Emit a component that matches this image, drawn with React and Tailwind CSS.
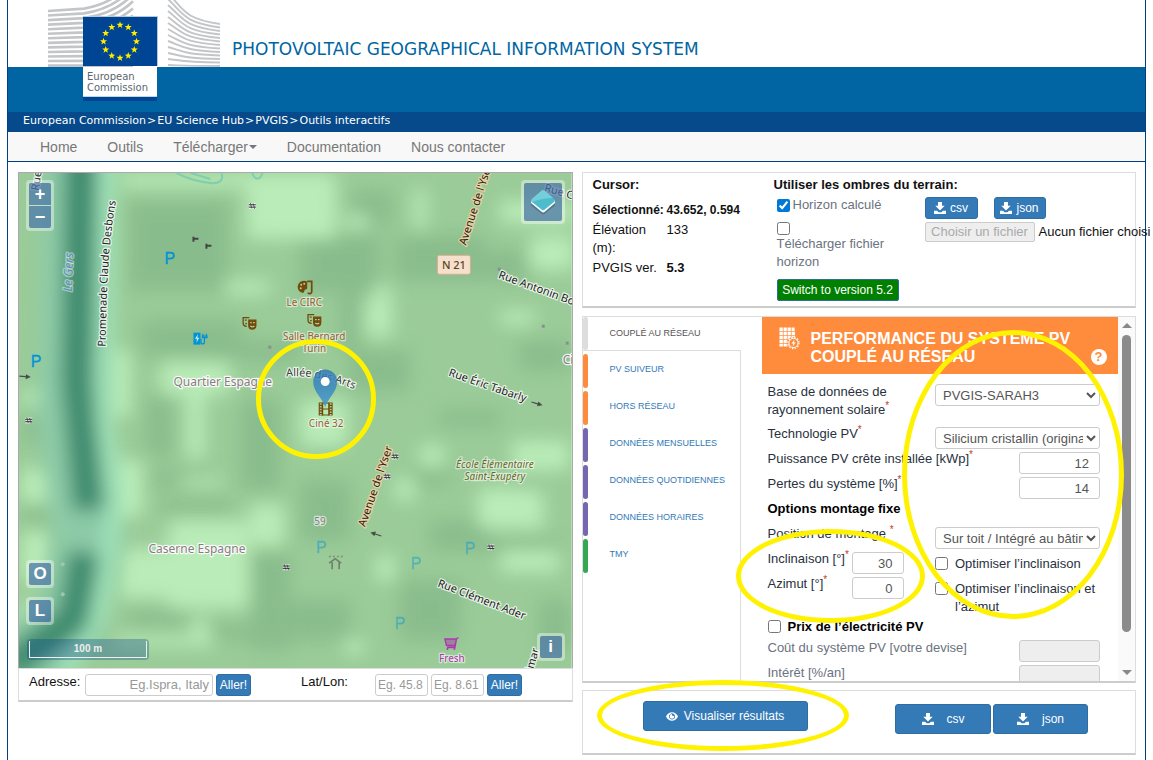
import { useState } from "react";

// Icons (download, eye, solar panel)
const DownloadIcon = ({ className }) => (
  <svg viewBox="0 0 14 14" className={className} fill="currentColor" aria-hidden="true">
    <path d="M4.700 0h4.600v4.500h3.200L7 10 1.500 4.500h3.200z" />
    <path d="M0 10.200h3.600L5.400 12h3.200l1.800-1.800H14V14H0z" />
  </svg>
);

const EyeIcon = ({ className }) => (
  <svg viewBox="0 0 14 12" className={className} fill="currentColor" aria-hidden="true">
    <path fillRule="evenodd" d="M7 1C3.800 1 1.200 3 0 6c1.200 3 3.800 5 7 5s5.800-2 7-5C12.800 3 10.200 1 7 1zm0 1.300c1 .3 3.600 1.100 3.600 3.500S9 9.600 7 9.600 3.400 8 3.400 5.800 6 2.600 7 2.300z" />
    <path d="M7 3.200a2.700 2.700 0 1 0 2.700 2.700c0-.4-.1-.8-.3-1.200A1.300 1.300 0 0 1 7.200 3.200z" />
  </svg>
);

const PanelIcon = () => (
  <svg viewBox="0 0 21 23" className="h-[23px] w-[21px] shrink-0" aria-hidden="true">
    <path d="M.5.5h15l1 12-5 7H.5z" fill="#fff" />
    <path d="M4.300 0v20M8.300 0v20M12.300 0v11M0 4.500h17M0 8.500h17M0 12.500h11M0 16.500h10" stroke="#ff8c3c" strokeWidth=".7" />
    <circle cx="14.500" cy="16" r="6.300" fill="#ff8c3c" />
    <circle cx="14.500" cy="16" r="4.600" fill="none" stroke="#fff" strokeWidth="1" />
    <circle cx="14.500" cy="16" r="5.600" fill="none" stroke="#fff" strokeWidth="1.200" strokeDasharray="1.400 1.530" />
    <path d="M15.500 12.800l-3 3.700h1.800l-.6 2.900 3-3.900h-1.800z" fill="#fff" />
  </svg>
);

// European Commission logo
const starAt = (cx, cy, r) => {
  const pts = [];
  for (let i = 0; i < 10; i++) {
    const a = (Math.PI / 5) * i - Math.PI / 2;
    const rad = i % 2 ? r * 0.42 : r;
    pts.push(`${(cx + rad * Math.cos(a)).toFixed(2)},${(cy + rad * Math.sin(a)).toFixed(2)}`);
  }
  return pts.join(" ");
};

const CommissionLogo = () => (
  <svg viewBox="48 0 172 102" className="h-[102px] w-[172px]" role="img" aria-label="European Commission">
    <g stroke="#c3c5c7" strokeWidth="2.600" fill="none">
      {Array.from({ length: 13 }, (_, i) => {
        const k = 12 - i;
        const y = 11 + i * 4.550;
        return <path key={i} d={`M48 ${y} L84 ${y - k * 0.2} C106 ${y - k * 0.5} 122 ${y - k * 1.400} 133 ${y - k * 2.600}`} />;
      })}
      {Array.from({ length: 13 }, (_, i) => {
        const k = 12 - i;
        const start = 65 - k * 6;
        const end = 66 - k * 3.500;
        return <path key={i} strokeWidth="1.900" d={`M168 ${start} C184 ${start + (end - start) * 0.55} 184 ${end - k * 0.45} 220 ${end}`} />;
      })}
    </g>
    <path d="M83 16h75v50H83z" fill="#b9c7dc" />
    <path d="M83 17h74v49H83z" fill="#004494" />
    <g fill="#ffed00">
      {Array.from({ length: 12 }, (_, i) => {
        const a = (Math.PI / 6) * i;
        return <polygon key={i} points={starAt(120 + 16.500 * Math.sin(a), 41.500 - 16.500 * Math.cos(a), 3.700)} />;
      })}
    </g>
    <path d="M83 67h74v30H83z" fill="#fff" />
    <path d="M83 97h74v4H83z" fill="#004494" />
    <path d="M83 96h74v1H83z" fill="#c4d2e4" />
    <g fill="#58666d" fontFamily='"DejaVu Sans", sans-serif' fontSize="10">
      <text x="87" y="80">European</text>
      <text x="87" y="91">Commission</text>
    </g>
  </svg>
);

// Terrain patches: x, y, width, height
const lightPatches = [
  [120, 172, 215, 14], [246, 176, 90, 62], [500, 200, 75, 22], [530, 235, 45, 34],
  [160, 362, 70, 32], [108, 350, 22, 66], [112, 460, 30, 56], [186, 388, 18, 70],
  [168, 520, 80, 88], [118, 548, 130, 50], [250, 504, 34, 42], [366, 300, 26, 36],
  [374, 284, 16, 24], [300, 400, 48, 46], [478, 488, 66, 40], [512, 440, 58, 30],
  [420, 445, 24, 20], [20, 468, 40, 34], [20, 532, 32, 50], [114, 636, 100, 10],
  [192, 618, 14, 20], [376, 555, 18, 26], [500, 550, 60, 22], [344, 640, 20, 14],
  [414, 188, 12, 40], [345, 214, 24, 14], [500, 310, 35, 14], [395, 478, 20, 22],
  [20, 600, 14, 34], [225, 280, 44, 14], [180, 476, 40, 10], [20, 390, 40, 14],
];
const darkPatches = [
  [128, 200, 100, 90], [352, 190, 40, 34], [300, 232, 80, 60], [140, 320, 100, 36],
  [395, 235, 90, 45], [340, 270, 20, 80], [210, 340, 90, 20], [145, 395, 28, 60],
  [150, 470, 60, 16], [160, 500, 70, 14], [240, 400, 40, 90], [250, 550, 40, 100],
  [130, 610, 60, 16], [210, 625, 70, 14], [410, 470, 40, 14], [520, 485, 22, 14],
  [490, 540, 70, 14], [400, 580, 60, 60], [290, 600, 60, 40], [520, 340, 50, 30],
  [470, 250, 60, 30], [350, 350, 60, 40], [22, 420, 40, 20], [24, 505, 30, 16],
  [440, 410, 60, 16], [430, 520, 60, 30], [300, 480, 50, 60], [540, 600, 30, 50],
];

const Hatch = ({ x, y }) => (
  <g transform={`translate(${x} ${y})`}>
    <path d="M-3.500 -1.500h7M-3.500 1.500h7" stroke="#fff" strokeWidth="3" opacity="0.6" />
    <path d="M-3.500 -1.200h7M-3.500 1.200h7" stroke="#3c3340" strokeWidth="1" />
    <path d="M-2 -3l1.500 5.500M.8 -2.500l1.500 5.500" stroke="#3c3340" strokeWidth=".7" />
  </g>
);

const Arrow = ({ x, y, turn }) => (
  <path transform={`translate(${x} ${y}) rotate(${turn})`} d="M-5.500-.6H1V-2.500L6 0 1 2.500V.6h-6.500z" fill="#4c4c4c" />
);

const Masks = ({ x, y }) => (
  <g transform={`translate(${x} ${y})`} fill="none" stroke="#734a08" strokeWidth="1.300">
    <path d="M7 1H.8v5.500c0 2 1.500 3 3.600 3.200M2.500 3.500h2M3 7.200l1.500-.6" />
    <path d="M6.500 3.500h7V9c0 2-1.400 3.400-3.500 3.400S6.500 11 6.500 9z" fill="#734a08" />
    <path d="M7.800 6h1.700M10.700 6h1.700M8 9.300c1.200 1 3 1 4 0" stroke="#a9d0a4" />
  </g>
);

const MapDrawing = () => (
  <svg
    viewBox="18 172 554 496"
    preserveAspectRatio="xMidYMid slice"
    className="absolute inset-0 h-full w-full"
    role="img"
    aria-label="Carte"
    fontFamily='"Noto Sans", sans-serif'
  >
    <defs>
      <filter id="soft" x="-20%" y="-20%" width="140%" height="140%"><feGaussianBlur stdDeviation="9" /></filter>
      <filter id="softer" x="-80%" y="-20%" width="260%" height="140%"><feGaussianBlur stdDeviation="9" /></filter>
      <linearGradient id="pin" x1="0" y1="0" x2="0" y2="1">
        <stop offset="0" stopColor="#2c77b5" />
        <stop offset="1" stopColor="#3f95d0" />
      </linearGradient>
      <path id="promenade" d="M105 346 C106 300 106 250 116 197" />
      <path id="allee" d="M286 376 Q318 373 360 391" />
    </defs>
    <rect x="18" y="172" width="554" height="496" fill="#9acb98" />
    <g filter="url(#soft)" fill="#86b98a" opacity="0.8">
      {darkPatches.map(([x, y, w, h], i) => <rect key={i} x={x} y={y} width={w} height={h} />)}
    </g>
    <g filter="url(#soft)" fill="#bdf0bc" opacity="0.9">
      {lightPatches.map(([x, y, w, h], i) => <rect key={i} x={x} y={y} width={w} height={h} />)}
    </g>

    {/* River */}
    <g filter="url(#softer)" fill="none">
      <path d="M76 150 L72 420 L88 540 L70 620 L10 680" stroke="#8dcba7" strokeWidth="70" />
      <path d="M108 150 L104 420 L116 500 L100 610 L60 680" stroke="#a3e6bd" strokeWidth="14" />
      <path d="M80 150 L76 380 L88 510" stroke="#3f8c6f" strokeWidth="32" />
      <path d="M84 552 L72 620 L30 650 L10 670" stroke="#3f8c6f" strokeWidth="32" />
    </g>

    {/* Small dots and road marks */}
    <g fill="#8d8d90">
      <rect x="498" y="267" width="3" height="3" />
      <rect x="542" y="324" width="3" height="3" />
      <rect x="566" y="341" width="3" height="3" />
      <rect x="268" y="345" width="3" height="3" />
    </g>
    <circle cx="62" cy="564" r="2" fill="#9ac9ad" />
    <circle cx="62" cy="594" r="2" fill="#9ac9ad" />
    <path d="M176 172c10 5 24 9 34 10 8 1 14-2 11-10M190 172l20 6M252 172c2 7 8 8 10 0" fill="none" stroke="#7fcfae" strokeWidth="2" />
    <Hatch x="252" y="205" />
    <Hatch x="28" y="420" />
    <Hatch x="286" y="567" />
    <Hatch x="395" y="456" />
    <Hatch x="387" y="476" />
    <Hatch x="491" y="547" />
    <Arrow x="24" y="376" turn="4" />
    <Arrow x="537" y="403" turn="16" />
    <Arrow x="376" y="534" turn="-162" />
    <path d="M192 238h6M193 236v5M205 245h6M206 243v5" stroke="#444" strokeWidth="2" />

    {/* Parkings and charging point */}
    <g fill="#0092da" stroke="#0092da" strokeWidth=".3" fontFamily='"Liberation Sans", sans-serif' fontSize="16">
      <text x="164" y="263">P</text>
      <text x="30" y="366">P</text>
      <g opacity="0.45">
        <text x="316" y="553">P</text>
        <text x="411" y="569">P</text>
        <text x="465" y="554">P</text>
        <text x="395" y="629">P</text>
      </g>
    </g>
    <path d="M193 332h7v12h-7z" fill="#0092da" />
    <path d="M197.500 333.500l-3 4.500h2l-.6 4 3-5h-2z" fill="#c9f0d8" />
    <path d="M200.500 338v3c0 3 3.500 3 3.500 0V337M202.500 333v2M206 333v2M202 335.500h4.500v1.500h-4.500z" fill="none" stroke="#0092da" strokeWidth="1.300" />

    {/* Culture icons */}
    <Masks x="242" y="316" />
    <Masks x="307" y="313" />
    <path d="M304 280c-4 0-6.500 3-6.500 6.300s2.500 5.700 5 5.700c2 0 1-2 2.200-3 1-.8 2.300 0 2.300-2V281c-1-.7-2-1-3-1z" fill="#734a08" />
    <circle cx="301" cy="284" r="1" fill="#a9d0a4" />
    <circle cx="300.500" cy="287.500" r="1" fill="#a9d0a4" />
    <circle cx="304" cy="283" r="1" fill="#a9d0a4" />
    <path d="M307 280.500h4.500v10.500c0 2-3 2.500-3.800 1" fill="none" stroke="#734a08" strokeWidth="1.700" />
    <path d="M318.500 402h4.500v13h-4.500zM328 402h4.500v13H328z" fill="#734a08" />
    <path d="M320.500 402.800v12M330.500 402.800v12" stroke="#a9d0a4" strokeWidth="1.800" strokeDasharray="1.500 1.200" />
    <path d="M322 402.500h7M322 408.500h7M322 414.500h7" stroke="#734a08" strokeWidth="1" />
    <path d="M329 563l6-4.500 6 4.500M332 562v7M339 562v7" fill="none" stroke="#6f7f6c" strokeWidth="1.600" />
    <path d="M329 557l1.500-1.500M333 557l1.500-1.500M337 557l1.500-1.500M341 557l1.500-1.500" stroke="#7d8b7a" strokeWidth="1.200" />
    <path d="M445 639h11.500l-1.500 6.500h-8.500zM458.500 637.500l-2 1.500-1.500 8.500h-8" fill="#ac39ac" fillOpacity="0.5" stroke="#ac39ac" strokeWidth="1.400" />
    <circle cx="447.500" cy="649" r="1" fill="#ac39ac" />
    <circle cx="454.500" cy="649" r="1" fill="#ac39ac" />

    {/* Road number */}
    <rect x="437.500" y="254.500" width="33" height="19" rx="2" fill="#f5e0cd" stroke="#dcae91" />
    <text x="442" y="268" fontSize="11" fontWeight="500" fill="#5e4420">N 21</text>

    {/* Labels */}
    <g stroke="#fff" strokeOpacity="0.75" strokeWidth="2.500" strokeLinejoin="round" paintOrder="stroke" fontSize="11" fill="#222">
      <text><textPath href="#promenade">Promenade Claude Desbons</textPath></text>
      <text fillOpacity="0.9"><textPath href="#allee">Allée des Arts</textPath></text>
      <text transform="translate(448 375) rotate(19)">Rue Éric Tabarly</text>
      <text transform="translate(498 277) rotate(20)">Rue Antonin Bourdelle</text>
      <text transform="translate(437 586) rotate(21)">Rue Clément Ader</text>
      <text transform="translate(544 190) rotate(16)">Rue Claude</text>
      <text transform="translate(38 190) rotate(-82)">Rue de la</text>
      <text transform="translate(533 672) rotate(-74)">lmar</text>
      <g stroke="#f6d3a2" strokeOpacity="0.9">
        <text transform="translate(466 245) rotate(-72)">Avenue de l'Yser</text>
        <text transform="translate(365 527) rotate(-71)">Avenue de l'Yser</text>
      </g>
      <text transform="translate(71 291) rotate(-88)" fontStyle="italic" fontSize="12" fill="#5b8fc0" strokeOpacity="0.45">Le Gers</text>
      <g fill="#8a7c82" fontSize="12" strokeOpacity="0.9">
        <text x="173" y="385">Quartier Espagne</text>
        <text x="148" y="553">Caserne Espagne</text>
        <text x="314" y="525" fontSize="10" strokeOpacity="0.6">59</text>
        <text x="563" y="363">Cité</text>
      </g>
      <g textAnchor="middle" fill="#94622c" strokeOpacity="0.55" fontSize="10">
        <text x="304" y="305">Le CIRC</text>
        <text x="314" y="339">Salle Bernard</text>
        <text x="314" y="351">Turin</text>
        <text x="326" y="427">Ciné 32</text>
        <text x="452" y="662" fill="#ac39ac">Fresh</text>
        <g fill="#6b6a2c" fontStyle="italic">
          <text x="495" y="468">École Élémentaire</text>
          <text x="495" y="480">Saint-Exupéry</text>
        </g>
      </g>
    </g>

    {/* Marker */}
    <path d="M325 407c-2-9-12-15-12-26a12 12 0 0 1 24 0c0 11-10 17-12 26z" fill="url(#pin)" fillOpacity="0.82" />
    <circle cx="325" cy="381" r="4.500" fill="#fff" />
  </svg>
);

const MapButton = ({ children, className, label }) => (
  <div className={`absolute rounded bg-white/40 p-[3px] ${className}`}>
    <button aria-label={label} className="block h-[22px] w-[22px] rounded-xs bg-[#003c88]/50 text-center text-[17px] leading-[20px] font-bold text-white">
      {children}
    </button>
  </div>
);

// Hand drawn ring over the page
const Ring = ({ className }) => (
  <div className={`pointer-events-none absolute z-20 rounded-[50%] border-[5px] border-[#fff200] ${className}`} />
);

const tabs = [
  { name: "PV SUIVEUR", color: "bg-[#ff8c3c]" },
  { name: "HORS RÉSEAU", color: "bg-[#ff8c3c]" },
  { name: "DONNÉES MENSUELLES", color: "bg-[#7668b0]" },
  { name: "DONNÉES QUOTIDIENNES", color: "bg-[#7668b0]" },
  { name: "DONNÉES HORAIRES", color: "bg-[#7668b0]" },
  { name: "TMY", color: "bg-[#35a853]" },
];

const panel = "border border-b-2 border-[#ddd] border-b-[#ccc] bg-white";
const btn = "inline-flex items-center justify-center rounded-[3px] border border-[#2e6da4] bg-[#337ab7] text-[12px] font-medium text-white";
const field = "h-[22px] rounded-[3px] border border-[#ccc] bg-white text-[#555]";

const Star = () => <sup className="text-[10px] leading-none text-[#c0392b]">*</sup>;

const App = () => {
  const [horizon, setHorizon] = useState(true);
  const [peak, setPeak] = useState("12");
  const [loss, setLoss] = useState("14");
  const [slope, setSlope] = useState("30");
  const [azimuth, setAzimuth] = useState("0");

  return (
    <div className="min-h-screen overflow-x-clip bg-white px-[7px] font-['Liberation_Sans',Arial,sans-serif] text-[13px] leading-[18px] text-[#111]">
      <div className="min-h-screen border-x border-[#004080]">

        {/* Header */}
        <header className="relative font-['DejaVu_Sans',Verdana,sans-serif]">
          <div className="absolute top-0 left-[40px]"><CommissionLogo /></div>
          <div className="flex h-[67px] items-end pb-[7px] pl-[224px]">
            <h1 className="text-[17px] leading-[22px] text-[#0065a2]">PHOTOVOLTAIC GEOGRAPHICAL INFORMATION SYSTEM</h1>
          </div>
          <div className="h-[45px] bg-[#0065a2]" />
          <div className="flex h-5 items-center gap-px bg-[#064a8b] pb-[3px] pl-[15px] text-[11px] text-white">
            <a href="#ec">European Commission</a> &gt; <a href="#hub">EU Science Hub</a> &gt; <a href="#pvgis">PVGIS</a> &gt; <span>Outils interactifs</span>
          </div>
        </header>

        {/* Menu */}
        <nav className="flex h-[30px] items-center gap-[30px] border-b border-[#004080] bg-[#f8f8f8] pl-[32px] text-[14px] text-[#777]">
          <a href="#home">Home</a>
          <a href="#outils">Outils</a>
          <a href="#telecharger" className="flex items-center gap-px">
            Télécharger
            <span className="mt-px border-x-4 border-t-4 border-x-transparent border-t-[#777]" />
          </a>
          <a href="#documentation">Documentation</a>
          <a href="#contact">Nous contacter</a>
        </nav>

        <main className="flex items-start gap-[9px] pt-[10px] pr-[9px] pl-[10px]">

          {/* Map column */}
          <section className="min-w-0 flex-1">
            <div className="relative h-[496px] overflow-hidden border border-b-0 border-[#aaa]">
              <MapDrawing />
              <div className="absolute top-[7px] left-[7px] rounded bg-white/40 p-[3px] text-[18px] font-bold text-white">
                <button aria-label="Zoom avant" className="block h-[22px] w-[22px] rounded-t-xs bg-[#003c88]/50 leading-[20px]">+</button>
                <button aria-label="Zoom arrière" className="mt-px block h-[22px] w-[22px] rounded-b-xs bg-[#003c88]/50 leading-[20px]">−</button>
              </div>
              <div className="absolute top-[7px] right-[7px] rounded bg-white/40 p-[3px]">
                <button aria-label="Couches" className="grid h-[38px] w-[38px] place-items-center rounded-xs bg-[#003c88]/50">
                  <svg viewBox="0 0 26 26" className="h-[26px] w-[26px]" aria-hidden="true">
                    <path d="M1 14l11 9.500q1.200.8 2.400 0L25 14v2.500L14.400 25q-1.200.8-2.400 0L1 16.500z" fill="#456" opacity=".5" />
                    <path d="M1 11v3l11 9q1.200.8 2.400 0L25 14v-3z" fill="#fff" />
                    <path d="M1.600 10.200L11.800 1.500q1.300-1 2.600 0l10 8.700q1.200 1.300 0 2.600l-10 7.900q-1.300 1-2.600 0l-10.200-7.900q-1.200-1.300 0-2.600z" fill="#4dbdcd" />
                    <path d="M1.600 10.200L11.800 1.500q1.300-1 2.600 0l8.500 7.300C17 9.500 9 10 2 13z" fill="#74cfdb" />
                  </svg>
                </button>
              </div>
              <MapButton className="bottom-[80px] left-[7px]" label="Opacité">O</MapButton>
              <MapButton className="bottom-[43px] left-[7px]" label="Légende">L</MapButton>
              <MapButton className="right-[7px] bottom-[7px]" label="Informations">i</MapButton>
              <div className="absolute bottom-[8px] left-[8px] rounded bg-[#003c88]/30 p-[2px]">
                <div className="h-[17px] w-[118px] border border-t-0 border-[#eee] text-center text-[10px] leading-[16px] font-bold text-[#eee]">100 m</div>
              </div>
              <Ring className="top-[166px] left-[237px] h-[120px] w-[120px]" />
            </div>
            <div className={`flex h-[34px] items-center pl-[10px] ${panel}`}>
              <label htmlFor="address" className="w-[56px] pb-[6px]">Adresse:</label>
              <input id="address" placeholder="Eg.Ispra, Italy" className={`w-[128px] px-[3px] text-right placeholder:text-[#999] ${field}`} />
              <button className={`ml-[3px] h-[22px] w-[35px] ${btn}`}>Aller!</button>
              <label htmlFor="lat" className="ml-[50px] w-[74px] pb-[6px]">Lat/Lon:</label>
              <input id="lat" placeholder="Eg. 45.8" className={`w-[53px] px-[2px] text-[12px] placeholder:text-[#999] ${field}`} />
              <input id="lon" aria-label="Lon" placeholder="Eg. 8.61" className={`ml-[3px] w-[53px] px-[2px] text-[12px] placeholder:text-[#999] ${field}`} />
              <button className={`ml-[3px] h-[22px] w-[35px] ${btn}`}>Aller!</button>
            </div>
          </section>

          {/* Tools column */}
          <section className="relative min-w-0 flex-1">

            {/* Cursor and horizon */}
            <div className={`flex h-[136px] pt-[3px] pl-[10px] ${panel}`}>
              <div className="w-[181px] shrink-0">
                <p className="font-bold">Cursor:</p>
                <dl className="mt-[7px] grid grid-cols-[74px_1fr] gap-y-[2px]">
                  <dt className="text-[12px] font-bold">Sélectionné:</dt>
                  <dd className="text-[12px] font-bold">43.652, 0.594</dd>
                  <dt>Élévation (m):</dt>
                  <dd>133</dd>
                  <dt>PVGIS ver.</dt>
                  <dd className="font-bold">5.3</dd>
                </dl>
              </div>
              <div className="min-w-0 flex-1">
                <p className="font-bold">Utiliser les ombres du terrain:</p>
                <div className="mt-[2px] flex items-start pl-[3px] text-[#6b7280]">
                  <div className="w-[148px] shrink-0">
                    <label className="flex items-center gap-[3px]">
                      <input type="checkbox" checked={horizon} onChange={(e) => setHorizon(e.target.checked)} className="h-[13px] w-[13px] accent-[#0078d7]" />
                      Horizon calculé
                    </label>
                    <label className="mt-2 block w-[110px]">
                      <input type="checkbox" className="block h-[13px] w-[13px]" />
                      Télécharger fichier horizon
                    </label>
                  </div>
                  <div className="pt-px whitespace-nowrap">
                    <button className={`h-[22px] w-[53px] gap-1 ${btn}`}><DownloadIcon className="h-3 w-3" />csv</button>
                    <button className={`ml-4 h-[22px] w-[52px] gap-1 ${btn}`}><DownloadIcon className="h-3 w-3" />json</button>
                    <div className="mt-[3px] flex items-center gap-1">
                      <input id="horizonFile" type="file" disabled className="sr-only" />
                      <label htmlFor="horizonFile" className="h-5 w-[110px] rounded-xs border border-[#ccc] bg-[#eee] text-center text-[#aaa]">Choisir un fichier</label>
                      <span className="text-[#111]">Aucun fichier choisi</span>
                    </div>
                  </div>
                </div>
                <button className="mt-[8px] ml-[3px] block h-[22px] w-[122px] rounded-xs border border-[#2e6da4] bg-[#008000] text-[12px] leading-[18px] font-medium text-white">Switch to version 5.2</button>
              </div>
            </div>

            {/* Tabs and form */}
            <div className={`mt-2 flex h-[367px] overflow-hidden ${panel}`}>
              <div className="w-[158px] shrink-0 border-r border-[#ddd] text-[9px]">
                <button className="flex h-[34px] w-[158px] border-b border-[#ddd] bg-white text-left text-[#555]">
                  <span className="h-full w-[5px] rounded-sm bg-[#ddd]" />
                  <span className="pt-[7px] pl-[22px]">COUPLÉ AU RÉSEAU</span>
                </button>
                {tabs.map((tab) => (
                  <button key={tab.name} className="mt-[3px] flex h-[34px] w-full text-left text-[#337ab7]">
                    <span className={`h-full w-[5px] rounded-sm ${tab.color}`} />
                    <span className="pt-[6px] pl-[22px]">{tab.name}</span>
                  </button>
                ))}
              </div>

              <form className="ml-[21px] flex-1 text-[#28313d]" onSubmit={(e) => e.preventDefault()}>
                <div className="flex h-[57px] items-start bg-[#ff8c3c] pt-[10px] pl-[17px] text-white">
                  <PanelIcon />
                  <h2 className="ml-[11px] w-[270px] pt-[3px] text-[16px] leading-[18px] font-bold">PERFORMANCE DU SYSTEME PV COUPLÉ AU RÉSEAU</h2>
                  <button type="button" aria-label="Aide" className="mt-[22px] ml-[10px] h-4 w-4 shrink-0 rounded-full bg-white text-[13px] leading-4 font-bold text-[#ff8c3c]">?</button>
                </div>

                <div className="pt-[9px] pr-[18px] pl-[6px]">
                  <div className="flex h-[42px] justify-between">
                    <label htmlFor="db" className="w-[140px]">Base de données de rayonnement solaire<Star /></label>
                    <select id="db" className={`mt-px w-[165px] pl-[3px] ${field}`}><option>PVGIS-SARAH3</option></select>
                  </div>
                  <div className="flex h-[25px] justify-between">
                    <label htmlFor="tech">Technologie PV<Star /></label>
                    <select id="tech" className={`mt-[2px] w-[165px] pl-[3px] ${field}`}><option>Silicium cristallin (original)</option></select>
                  </div>
                  <div className="flex h-[25px] justify-between">
                    <label htmlFor="peak">Puissance PV crête installée [kWp]<Star /></label>
                    <input id="peak" value={peak} onChange={(e) => setPeak(e.target.value)} className={`mt-[2px] w-[81px] pr-[10px] text-right ${field}`} />
                  </div>
                  <div className="flex h-[25px] justify-between">
                    <label htmlFor="loss">Pertes du système [%]<Star /></label>
                    <input id="loss" value={loss} onChange={(e) => setLoss(e.target.value)} className={`mt-[2px] w-[81px] pr-[10px] text-right ${field}`} />
                  </div>
                  <p className="h-[25px] font-bold text-black">Options montage fixe</p>
                  <div className="flex h-[25px] justify-between">
                    <label htmlFor="mount">Position de montage <Star /></label>
                    <select id="mount" className={`mt-[2px] w-[165px] pl-[3px] ${field}`}><option>Sur toit / Intégré au bâtiment</option></select>
                  </div>
                  <div className="flex h-[25px]">
                    <label htmlFor="slope" className="w-[84px]">Inclinaison [°]<Star /></label>
                    <input id="slope" value={slope} onChange={(e) => setSlope(e.target.value)} className={`mt-[2px] w-[52px] pr-[10px] text-right ${field}`} />
                    <label className="ml-auto flex w-[165px] items-start gap-[7px] pt-[5px]">
                      <input type="checkbox" className="mt-[2px] h-[13px] w-[13px] shrink-0" />
                      Optimiser l’inclinaison
                    </label>
                  </div>
                  <div className="flex h-[43px]">
                    <label htmlFor="azimuth" className="w-[84px]">Azimut [°]<Star /></label>
                    <input id="azimuth" value={azimuth} onChange={(e) => setAzimuth(e.target.value)} className={`mt-[2px] w-[52px] pr-[10px] text-right ${field}`} />
                    <label className="ml-auto flex w-[165px] items-start gap-[7px] pt-[5px]">
                      <input type="checkbox" className="mt-[2px] h-[13px] w-[13px] shrink-0" />
                      Optimiser l’inclinaison et l’azimut
                    </label>
                  </div>
                  <label className="flex h-[21px] items-start gap-[7px] font-bold text-black">
                    <input type="checkbox" className="mt-[2px] h-[13px] w-[13px]" />
                    Prix de l’électricité PV
                  </label>
                  <div className="flex h-[25px] justify-between text-[#6b7280]">
                    <label htmlFor="cost">Coût du système PV [votre devise]</label>
                    <input id="cost" disabled className="mt-px h-[22px] w-[81px] rounded-[3px] border border-[#ccc] bg-[#eee]" />
                  </div>
                  <div className="flex h-[25px] justify-between text-[#6b7280]">
                    <label htmlFor="interest">Intérêt [%/an]</label>
                    <input id="interest" disabled className="mt-px h-[22px] w-[81px] rounded-[3px] border border-[#ccc] bg-[#eee]" />
                  </div>
                </div>
              </form>

              {/* Scroll bar */}
              <div className="flex w-[17px] shrink-0 flex-col items-center bg-[#fafafa] py-[6px]">
                <span className="border-x-[5px] border-b-[5px] border-x-transparent border-b-[#888]" />
                <span className="mt-[7px] h-[297px] w-[9px] rounded-full bg-[#8b8b8b]" />
                <span className="mt-auto border-x-[5px] border-t-[5px] border-x-transparent border-t-[#888]" />
              </div>
            </div>

            {/* Results */}
            <div className={`mt-[7px] flex h-[65px] items-start pt-[10px] pr-[47px] pl-[60px] ${panel}`}>
              <button className={`h-[30px] w-[165px] gap-[6px] ${btn}`}><EyeIcon className="h-[11px] w-3" />Visualiser résultats</button>
              <button className={`mt-[3px] ml-auto h-[30px] w-[96px] gap-[13px] ${btn}`}><DownloadIcon className="h-3 w-3" />csv</button>
              <button className={`mt-[3px] ml-[2px] h-[30px] w-[95px] gap-[13px] ${btn}`}><DownloadIcon className="h-3 w-3" />json</button>
            </div>

            <Ring className="top-[158px] right-[12px] h-[289px] w-[222px]" />
            <Ring className="top-[357px] left-[154px] h-[94px] w-[189px]" />
            <Ring className="top-[508px] left-[15px] h-[71px] w-[252px]" />
          </section>
        </main>
      </div>
    </div>
  );
};

export default App;
